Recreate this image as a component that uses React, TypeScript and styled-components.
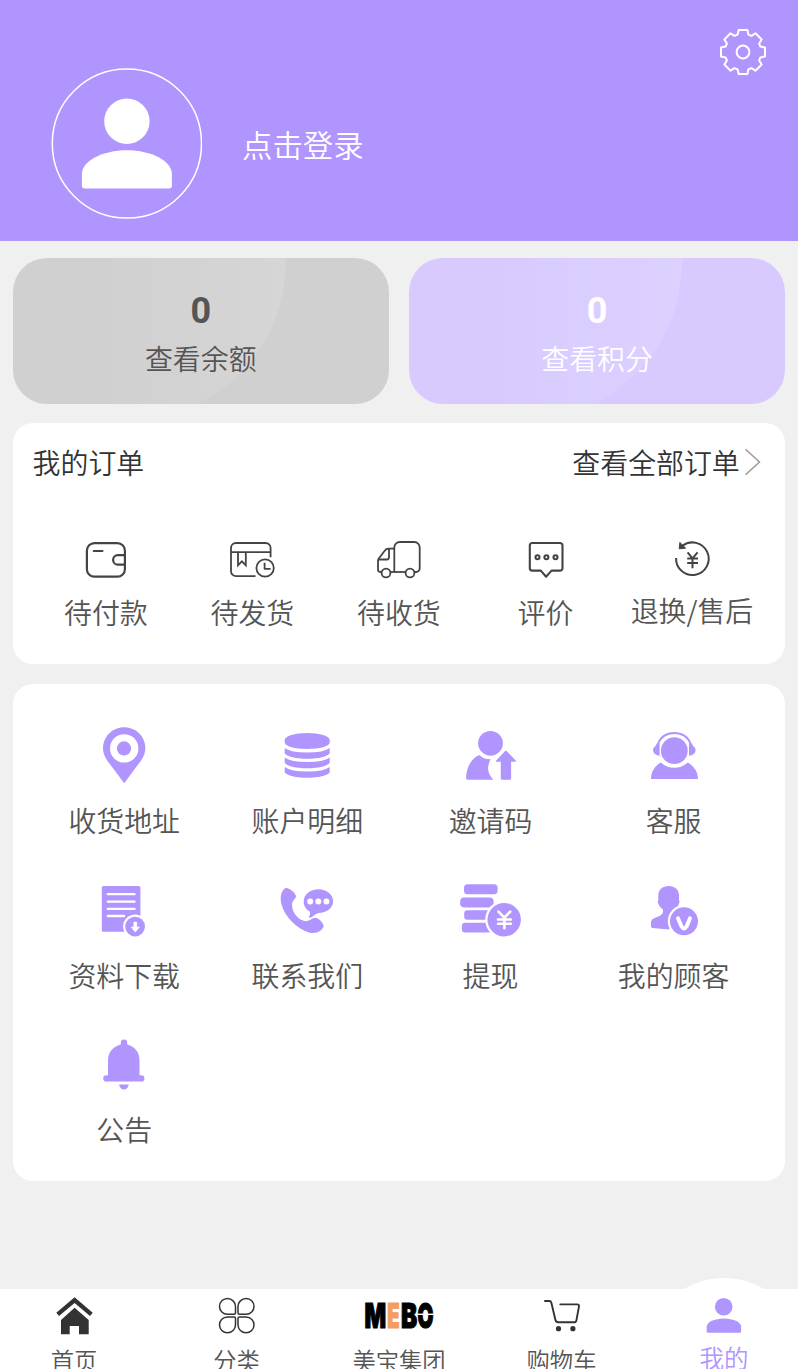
import React from 'react';
import styled, { createGlobalStyle } from 'styled-components';

const PURPLE = '#b095ff';
const INK = '#444';

const GlobalStyle = createGlobalStyle`
  * { box-sizing: border-box; }
  html, body { margin: 0; padding: 0; height: 100%; overflow: hidden; }
  body {
    background: #f0f0f0;
    font-family: "Noto Sans CJK SC DemiLight", "Noto Sans CJK SC", sans-serif;
    font-weight: 350;
    color: #555;
  }
`;

const Page = styled.div`
  width: 798px;
  height: 1369px;
  overflow: hidden;
  display: flex;
  flex-direction: column;
  background: #f0f0f0;
`;

const Header = styled.header`
  flex: none;
  height: 241px;
  padding: 28px 31px 0 51px;
  display: flex;
  align-items: flex-start;
  background: ${PURPLE};
  color: #fff;
`;

const Avatar = styled.svg`
  flex: none;
  width: 151px;
  height: 151px;
  margin-top: 40px;
`;

const LoginText = styled.div`
  flex: 1;
  margin: 94px 0 0 40px;
  font-size: 30.4px;
  line-height: 44px;
`;

const GearIcon = styled.svg`
  flex: none;
  width: 48px;
  height: 48px;
`;

const Main = styled.main`
  flex: 1;
  display: flex;
  flex-direction: column;
  padding: 17px 12.8px 0 12.6px;
`;

const Balances = styled.div`
  display: grid;
  grid-template-columns: 1fr 1fr;
  gap: 20px;
  margin-bottom: 19px;
`;

const BalanceCard = styled.div<{ $bg: string; $fg: string }>`
  position: relative;
  overflow: hidden;
  height: 146px;
  border-radius: 34px;
  background: ${(p) => p.$bg};
  color: ${(p) => p.$fg};
  display: flex;
  flex-direction: column;
  align-items: center;
  padding-top: 32px;

  &::before {
    content: '';
    position: absolute;
    left: -43px;
    top: -154px;
    width: 316px;
    height: 316px;
    border-radius: 50%;
    background: linear-gradient(to right, rgba(255, 255, 255, 0) 40%, rgba(255, 255, 255, 0.13));
  }
`;

const BalanceValue = styled.div`
  position: relative;
  font-family: Roboto, sans-serif;
  font-size: 36px;
  line-height: 42px;
  font-weight: 700;
`;

const BalanceLabel = styled.div`
  position: relative;
  margin-top: 5px;
  font-size: 27.9px;
  line-height: 42px;
`;

const Card = styled.section<{ $height: number }>`
  height: ${(p) => p.$height}px;
  border-radius: 20px;
  background: #fff;
  padding: 0 20px;
  margin-bottom: 20px;
`;

const OrdersHead = styled.div`
  display: flex;
  align-items: center;
  justify-content: space-between;
  height: 78px;
  font-size: 27.9px;
  line-height: 40px;
  color: #333;
`;

const AllOrders = styled.div`
  display: flex;
  align-items: center;
  gap: 4.5px;
  padding-right: 4px;
`;

const OrderRow = styled.div`
  display: grid;
  grid-template-columns: repeat(5, 1fr);
  margin-top: 33.5px;
`;

const GridRows = styled.div`
  display: grid;
  grid-template-columns: repeat(4, 1fr);
  grid-auto-rows: 154.7px;
  padding-top: 39px;
`;

const Item = styled.div`
  display: flex;
  flex-direction: column;
  align-items: center;
`;

const ItemLabel = styled.div<{ $top: number }>`
  margin-top: ${(p) => p.$top}px;
  font-size: 27.9px;
  line-height: 40px;
  white-space: nowrap;
`;

const OrderIcon = styled.svg`
  width: 50px;
  height: 50px;
  fill: none;
  stroke: ${INK};
  stroke-linejoin: round;
`;

const MenuIcon = styled.svg`
  width: 64px;
  height: 64px;
  fill: ${PURPLE};
`;

const Nav = styled.nav`
  flex: none;
  height: 80px;
  display: grid;
  grid-template-columns: repeat(5, 162.5px);
  justify-content: center;
  background: #fff;
`;

const NavItem = styled.div<{ $active?: boolean }>`
  position: relative;
  display: flex;
  flex-direction: column;
  align-items: center;
  padding-top: 6px;
  color: ${(p) => (p.$active ? PURPLE : '#555')};

  &::before {
    content: '';
    display: ${(p) => (p.$active ? 'block' : 'none')};
    position: absolute;
    left: 50%;
    top: -11px;
    width: 156px;
    height: 156px;
    margin-left: -78px;
    border-radius: 50%;
    background: #fff;
  }
`;

const NavIcon = styled.svg`
  position: relative;
  width: 72px;
  height: 40px;
  flex: none;
`;

const NavLabel = styled.div<{ $active?: boolean }>`
  position: relative;
  flex: none;
  margin-top: ${(p) => (p.$active ? 6 : 8)}px;
  font-size: ${(p) => (p.$active ? 24.5 : 23.3)}px;
  line-height: 34px;
  white-space: nowrap;
`;

const gearPath = (() => {
  const tooth: [number, number][] = [
    [-5.4, -17.4],
    [-4.4, -22],
    [4.4, -22],
    [5.4, -17.4],
  ];
  const points: string[] = [];
  for (let i = 0; i < 8; i++) {
    const a = (i * Math.PI) / 4;
    tooth.forEach(([x, y]) => {
      const px = x * Math.cos(a) - y * Math.sin(a);
      const py = x * Math.sin(a) + y * Math.cos(a);
      points.push(`${px.toFixed(2)} ${py.toFixed(2)}`);
    });
  }
  return `M${points.join('L')}Z`;
})();

const orders = [
  {
    label: '待付款',
    icon: (
      <g strokeWidth="2.2" transform="translate(-0.4 0)">
        <rect x="6.3" y="8.1" width="38" height="33.6" rx="7.5" />
        <path d="M13.2 16h8.6" strokeLinecap="round" />
        <path d="M44.3 20.2H37.2a4.7 4.7 0 0 0 0 9.4h7.1" />
      </g>
    ),
  },
  {
    label: '待发货',
    icon: (
      <g strokeWidth="1.8">
        <path d="M43.6 22.3V13a5 5 0 0 0-5-5H9a5 5 0 0 0-5 5v23.2a5 5 0 0 0 5 5H28.5" />
        <path d="M4 17.2h39.6" />
        <path d="M11 17.2V30.3l3.9-4 3.9 4V17.2" strokeLinejoin="miter" />
        <circle cx="38.1" cy="33" r="8.7" />
        <path d="M37.6 27.8V33.8H43.6" />
      </g>
    ),
  },
  {
    label: '待收货',
    icon: (
      <g strokeWidth="1.8">
        <path d="M20.3 37V12.5a5.5 5.5 0 0 1 5.5-5.5H40.2a5.5 5.5 0 0 1 5.5 5.5V33.5a3.5 3.5 0 0 1-3.5 3.5H40.4" />
        <path d="M20.3 13.7H14.5a4.5 4.5 0 0 0-3.8 2L5 23.2a4 4 0 0 0-1 2.6V34.6a2.4 2.4 0 0 0 2.4 2.4H7.7" />
        <path d="M15 13.7V22.3a2.2 2.2 0 0 1-2.2 2.2H4.3" />
        <path d="M16.3 37H31.7" />
        <circle cx="12" cy="38" r="4.4" />
        <circle cx="36" cy="38" r="4.4" />
      </g>
    ),
  },
  {
    label: '评价',
    icon: (
      <g strokeWidth="2.1" transform="translate(0.5 0)">
        <path d="M12 8H39.6a2.4 2.4 0 0 1 2.4 2.4V33.2a2.4 2.4 0 0 1-2.4 2.4H31L25.6 41.7 20.3 35.6H11.7a2.4 2.4 0 0 1-2.4-2.4V10.4A2.4 2.4 0 0 1 11.7 8Z" />
        <circle cx="17" cy="22.3" r="2" />
        <circle cx="25.9" cy="22.3" r="2" />
        <circle cx="35" cy="22.3" r="2" />
      </g>
    ),
  },
  {
    label: '退换/售后',
    icon: (
      <g strokeWidth="2">
        <path d="M9.1 23A16.3 16.3 0 1 0 15.2 11" />
        <path d="M12.9 7.4L12.2 13.8 18.6 13.2Z" fill={INK} strokeWidth="1" />
        <path d="M20.6 17.4L25.5 23.3 30.6 17.4M20.2 23.5H31M20.2 28H31M25.5 23.3V33.2" />
      </g>
    ),
  },
];

const menu = [
  {
    label: '收货地址',
    icon: (
      <>
        <path d="M32.2 4.3C20.4 4.3 11 13.7 11 25.2c0 4.2 1.5 8.2 4 12L32.2 60.3 49.3 37.2c2.5-3.8 4-7.8 4-12C53.3 13.7 44 4.3 32.2 4.3Z" />
        <circle cx="32.2" cy="25.4" r="14.2" fill="#fff" />
        <circle cx="32" cy="25.4" r="7.1" />
      </>
    ),
  },
  {
    label: '账户明细',
    icon: (
      <>
        <path d="M9.7 17C9.7 13 19.8 10 32.2 10s22.5 3 22.5 7v2.5C54.7 23.2 44.6 26 32.2 26S9.7 23.2 9.7 19.5Z" />
        <path d="M9.7 25Q16 29.5 32.2 29.5T54.7 25V30.2C52.5 33.5 43.5 35.7 32.2 35.7S11.9 33.5 9.7 30.2Z" />
        <path d="M9.7 34.5Q16 39 32.2 39T54.7 34.5V39.7C52.5 43 43.5 45.2 32.2 45.2S11.9 43 9.7 39.7Z" />
        <path d="M9.7 44Q16 48.5 32.2 48.5T54.7 44V49.2C52.5 52.5 43.5 54.7 32.2 54.7S11.9 52.5 9.7 49.2Z" />
      </>
    ),
  },
  {
    label: '邀请码',
    icon: (
      <g transform="translate(0.4 0)">
        <circle cx="32.1" cy="20.3" r="12.4" />
        <path d="M20.4 32.3C12.5 36 7.7 45 7.7 55.5c0 .8.5 1.2 1.2 1.2H35C31.5 53.5 29.7 49.5 29.7 45.3c0-3.3 1-6.2 2.7-9-4.5.2-8.2-1.2-10.4-3.6-.5-.6-1-.7-1.6-.4Z" />
        <path d="M46.7 27.9q.7-.8 1.4 0L57.5 37.7q.8 1-.4 1H52.7V55.5q0 1.2-1.2 1.2H43.6q-1.2 0-1.2-1.2V38.7H38q-1.2 0-.4-1Z" />
      </g>
    ),
  },
  {
    label: '客服',
    icon: (
      <>
        <circle cx="32.3" cy="27.7" r="13.4" />
        <path d="M15.8 21.2C18.5 14 24.8 10 32.3 10s13.8 4 16.5 11.2" fill="none" stroke={PURPLE} strokeWidth="1.8" />
        <path d="M15 20.2H17.6V33Q11 31.6 11 27Q11 24.3 13.3 23.2Z" />
        <path d="M49.6 20.2H47V33Q53.6 31.6 53.6 27Q53.6 24.3 51.3 23.2Z" />
        <path d="M18.8 39.6C13 43 9 48.5 9 56H56C56 48.5 51.5 43 45.8 39.6C42 43.1 37.5 44.8 32.3 44.8S22.5 43.1 18.8 39.6Z" />
      </>
    ),
  },
  {
    label: '资料下载',
    icon: (
      <g transform="translate(-0.2 -0.4)">
        <rect x="10" y="8.3" width="38.6" height="45.8" rx="1.5" />
        <path d="M16 16.6H42.8M16 24H42.8M16 31.3H42.8M16 38.4H32.3" stroke="#fff" strokeWidth="2.3" strokeLinecap="round" />
        <circle cx="43.3" cy="49" r="12" fill="#fff" />
        <circle cx="43.3" cy="49" r="9.9" />
        <path d="M42 44.4h3v5h2.7L43.5 54.6 39.3 49.4H42Z" fill="#fff" stroke="#fff" strokeWidth=".5" strokeLinejoin="round" />
      </g>
    ),
  },
  {
    label: '联系我们',
    icon: (
      <>
        <path d="M12.5 10.2C15.6 11.2 18.7 13.5 20.7 16.9Q21.3 18.5 20.5 20C18.5 22 17 24 17 26.8C17 34.5 23.5 42.5 30.5 43.2C33.8 43.2 35.6 41.5 38 40.3Q40.5 39.3 42.5 40.5C45.5 42 47.5 44.5 48.6 47.5C48.8 49 47.5 50.5 46.4 51.7C43.5 54.5 39.5 55.6 34.7 54.7C22 51 10 39 6.5 26.5C5 20 5.7 15 8.5 11.7C9.5 10.4 11 9.8 12.5 10.2Z" />
        <path d="M43.4 11.3C51.6 11.3 58.1 16.5 58.1 23.3S51.6 35 43.4 35Q40 36.5 37.7 38.4Q35 40.5 33.7 39.4C35 37.6 35.2 35.8 34.9 33.5C31 31.5 28.7 27.9 28.7 23.4C28.7 16.5 35.2 11.3 43.4 11.3Z" />
        <circle cx="35.2" cy="23.5" r="3" fill="#fff" />
        <circle cx="43.3" cy="23.5" r="3" fill="#fff" />
        <circle cx="51.4" cy="23.5" r="3" fill="#fff" />
      </>
    ),
  },
  {
    label: '提现',
    icon: (
      <g transform="translate(0.5 0)">
        <rect x="5.5" y="6.3" width="33.6" height="10" rx="3.5" />
        <rect x="1.7" y="19.5" width="33.4" height="9.9" rx="3.8" />
        <rect x="5.7" y="32.3" width="28" height="9.5" rx="3.3" />
        <rect x="3.4" y="44.7" width="30" height="9.9" rx="3.3" />
        <circle cx="45.7" cy="41.7" r="19" fill="#fff" />
        <circle cx="45.7" cy="41.7" r="16.7" />
        <path d="M40 33.7L45.8 39.7 51.7 33.7M39.5 41.5H52.3M39.5 45.8H52.3M45.9 39.7V50.2" fill="none" stroke="#fff" strokeWidth="2.6" strokeLinecap="round" />
      </g>
    ),
  },
  {
    label: '我的顾客',
    icon: (
      <>
        <path d="M26.7 8C33 8 37 12 37 17.5V22Q38.3 23.5 37 25.5C36.3 28 35 30 33 31.5V40L27 51.5 10.5 50Q9 49.8 9 48.5V44Q9.2 41.5 11.5 40.5L18 37.8C20.5 36.5 21.8 33.5 20.7 31.2C18.5 29.8 17 27.8 16.3 25.5Q15 23.5 16.3 22V17.5C16.3 12 20.4 8 26.7 8Z" />
        <circle cx="42" cy="43.3" r="16.2" fill="#fff" />
        <circle cx="42" cy="43.3" r="14" />
        <path d="M36 40.2L39.5 48.5Q42 52.5 44.6 48.5L48 40.2" fill="none" stroke="#fff" strokeWidth="3.9" strokeLinecap="round" />
      </>
    ),
  },
  {
    label: '公告',
    icon: (
      <>
        <path d="M16 43.3V28.5C16 20.5 21 14.5 28.8 12.6V10.7a3.2 3.2 0 0 1 6.4 0V12.6C43 14.5 47.5 20.5 47.5 28.5V43.3H49.3a3.15 3.15 0 0 1 0 6.3H14.4a3.15 3.15 0 0 1 0-6.3Z" />
        <path d="M27 52.6H36.8C36 56 34.5 57.6 31.9 57.6S27.8 56 27 52.6Z" />
      </>
    ),
  },
];

const logoLetters = [
  { ch: 'M', x: 1.4, w: 21.6, color: '#000' },
  { ch: 'E', x: 24.2, w: 12.4, color: '#f49d62' },
  { ch: 'B', x: 38, w: 16.2, color: '#000' },
  { ch: 'O', x: 54.6, w: 16, color: '#000' },
];

const nav = [
  {
    label: '首页',
    icon: (
      <g fill="#333">
        <path d="M36.6 2.3L54.7 17.7 52 21 36.6 8 21 21 18.3 17.7Z" />
        <path d="M36.6 12.8L50.7 25V39.3H41V31H31.7V39.3H23V25Z" />
      </g>
    ),
  },
  {
    label: '分类',
    icon: (
      <g fill="none" stroke="#333" strokeWidth="1.5" transform="translate(-0.5 0)">
        <path d="M26.9 3.5a8.1 8.1 0 0 1 8.1 8.1V17.8a1.5 1.5 0 0 1-1.5 1.5H26.9a7.9 7.9 0 0 1 0-15.8Z" />
        <path d="M45.6 3.5a8.1 8.1 0 0 0-8.1 8.1V17.8a1.5 1.5 0 0 0 1.5 1.5H45.6a7.9 7.9 0 0 0 0-15.8Z" />
        <path d="M26.9 37.8a8.1 8.1 0 0 0 8.1-8.1V23.5a1.5 1.5 0 0 0-1.5-1.5H26.9a7.9 7.9 0 0 0 0 15.8Z" />
        <path d="M45.6 37.8a8.1 8.1 0 0 1-8.1-8.1V23.5a1.5 1.5 0 0 1 1.5-1.5H45.6a7.9 7.9 0 0 1 0 15.8Z" />
      </g>
    ),
  },
  {
    label: '美宝集团',
    icon: (
      <>
        <g fontFamily="Inter, sans-serif" fontWeight="900" fontSize="34">
          {logoLetters.map((l) => (
            <text key={l.ch} x={l.x} y="32.8" textLength={l.w} lengthAdjust="spacingAndGlyphs" fill={l.color} stroke={l.color} strokeWidth="1.2">
              {l.ch}
            </text>
          ))}
        </g>
        <path d="M54.5 19.3H71" stroke="#fff" strokeWidth="1.4" />
      </>
    ),
  },
  {
    label: '购物车',
    icon: (
      <>
        <path d="M19 6H23.3Q24.9 6 25.3 7.5L29.3 24.5Q29.9 27.3 32.3 27.3H48Q50.1 27.3 50.4 25.3L53 11.3Q53.2 9.4 51.3 9.4H34.3" fill="none" stroke="#333" strokeWidth="1.9" strokeLinecap="round" strokeLinejoin="round" />
        <circle cx="32.5" cy="33.7" r="2.6" fill="#333" />
        <circle cx="46.9" cy="33.7" r="2.6" fill="#333" />
      </>
    ),
  },
  {
    label: '我的',
    active: true,
    icon: (
      <g fill={PURPLE}>
        <circle cx="35.7" cy="11.7" r="8.8" />
        <path d="M18.7 31.5C18.7 27 26.5 23.4 35.9 23.4S53.1 27 53.1 31.5V36.5Q53.1 37.7 51.9 37.7H19.9Q18.7 37.7 18.7 36.5Z" />
      </g>
    ),
  },
];

export default function App() {
  return (
    <>
      <GlobalStyle />
      <Page>
        <Header>
          <Avatar viewBox="0 0 151 151">
            <circle cx="75.9" cy="75.5" r="74.6" fill="none" stroke="#fff" strokeWidth="1.5" />
            <circle cx="75.9" cy="53.3" r="22.7" fill="#fff" />
            <path d="M30.9 106C30.9 93 51.4 82.3 75.9 82.3S120.9 93 120.9 106V117.6Q120.9 120.6 117.9 120.6H33.9Q30.9 120.6 30.9 117.6Z" fill="#fff" />
          </Avatar>
          <LoginText>点击登录</LoginText>
          <GearIcon viewBox="-24 -24 48 48" fill="none" stroke="#fff" strokeWidth="2" strokeLinejoin="round">
            <path d={gearPath} />
            <circle r="6.4" />
          </GearIcon>
        </Header>
        <Main>
          <Balances>
            <BalanceCard $bg="#d0d0d0" $fg="#555">
              <BalanceValue>0</BalanceValue>
              <BalanceLabel>查看余额</BalanceLabel>
            </BalanceCard>
            <BalanceCard $bg="#d8caff" $fg="#fff">
              <BalanceValue>0</BalanceValue>
              <BalanceLabel>查看积分</BalanceLabel>
            </BalanceCard>
          </Balances>
          <Card $height={241}>
            <OrdersHead>
              <span>我的订单</span>
              <AllOrders>
                <span>查看全部订单</span>
                <svg width="17" height="28" viewBox="0 0 17 28" fill="none" stroke="#999" strokeWidth="1.5">
                  <path d="M1.5 1.2L15.5 14 1.5 26.8" />
                </svg>
              </AllOrders>
            </OrdersHead>
            <OrderRow>
              {orders.map((o, i) => (
                <Item key={o.label}>
                  <OrderIcon viewBox="0 0 50 50">{o.icon}</OrderIcon>
                  <ItemLabel $top={i === 4 ? 5 : 7}>{o.label}</ItemLabel>
                </Item>
              ))}
            </OrderRow>
          </Card>
          <Card $height={497}>
            <GridRows>
              {menu.map((m) => (
                <Item key={m.label}>
                  <MenuIcon viewBox="0 0 64 64">{m.icon}</MenuIcon>
                  <ItemLabel $top={13}>{m.label}</ItemLabel>
                </Item>
              ))}
            </GridRows>
          </Card>
        </Main>
        <Nav>
          {nav.map((n) => (
            <NavItem key={n.label} $active={n.active}>
              <NavIcon viewBox="0 0 72 40">{n.icon}</NavIcon>
              <NavLabel $active={n.active}>{n.label}</NavLabel>
            </NavItem>
          ))}
        </Nav>
      </Page>
    </>
  );
}
